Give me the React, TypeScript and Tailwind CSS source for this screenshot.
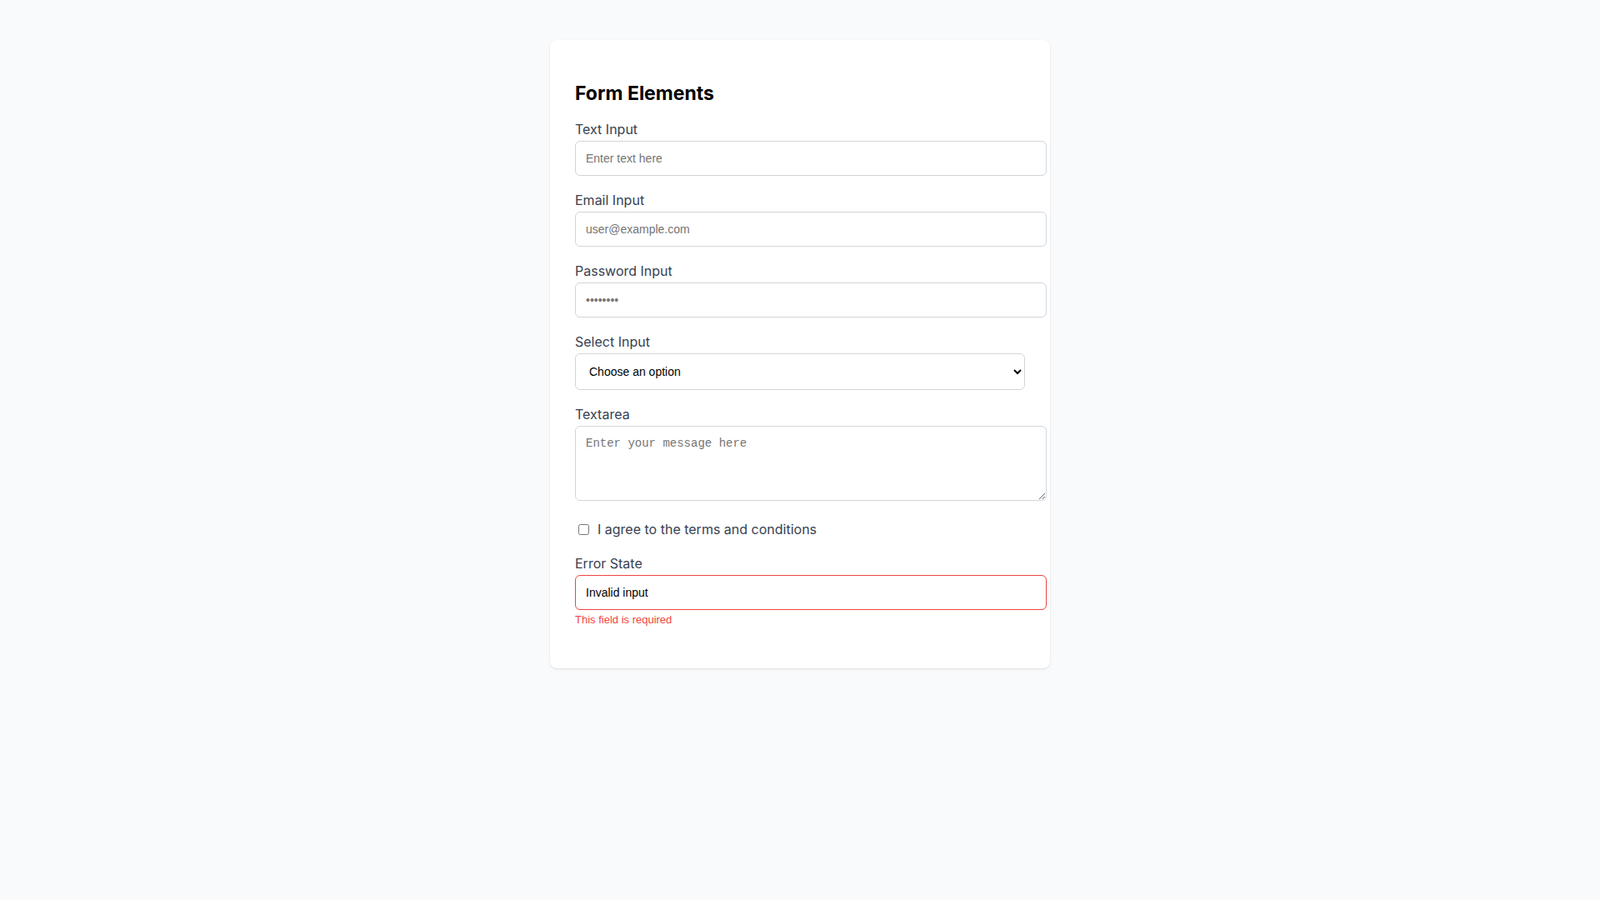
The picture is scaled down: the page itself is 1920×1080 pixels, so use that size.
import React from "react";

const labelCls = "block mb-1 text-base leading-[19px] font-normal text-[#374151]";
const inputCls =
  "box-content block w-full px-3 py-3 text-sm leading-4 border border-[#d1d5db] rounded-md bg-white text-black placeholder:text-[#757575] font-['Liberation_Sans',Arial,sans-serif] outline-none";

function Field({ label, children }: { label: string; children: React.ReactNode }) {
  return (
    <div className="mb-5">
      <label className={labelCls}>{label}</label>
      {children}
    </div>
  );
}

export default function App() {
  return (
    <div className="min-h-screen bg-[#f9fafb] pt-12 font-['Inter',sans-serif]">
      <div className="w-[600px] mx-auto bg-white rounded-lg shadow-sm p-[30px]">
        <h2 className="mt-5 mb-[19px] text-[23px] leading-[29px] font-bold text-black">Form Elements</h2>

        <Field label="Text Input">
          <input type="text" placeholder="Enter text here" className={inputCls} />
        </Field>

        <Field label="Email Input">
          <input type="email" placeholder="user@example.com" className={inputCls} />
        </Field>

        <Field label="Password Input">
          <input type="password" placeholder="••••••••" className={inputCls} />
        </Field>

        <Field label="Select Input">
          <select
            defaultValue=""
            className="block w-full h-[44px] px-3 text-sm border border-[#d1d5db] rounded-md bg-white text-black font-['Liberation_Sans',Arial,sans-serif]"
          >
            <option value="">Choose an option</option>
            <option value="1">Option 1</option>
            <option value="2">Option 2</option>
          </select>
        </Field>

        <Field label="Textarea">
          <textarea
            placeholder="Enter your message here"
            className="box-content block w-full h-16 px-3 py-3 text-sm leading-4 border border-[#d1d5db] rounded-md bg-white placeholder:text-[#757575] font-['Liberation_Mono','Courier_New',monospace] outline-none"
          />
        </Field>

        <div className="pt-[5px] mb-[22px] flex items-center">
          <input type="checkbox" className="ml-1 mr-[10px] w-[13px] h-[13px]" />
          <span className="text-base leading-[19px] font-normal text-[#374151]">
            I agree to the terms and conditions
          </span>
        </div>

        <Field label="Error State">
          <input
            type="text"
            defaultValue="Invalid input"
            className="box-content block w-full px-3 py-3 text-sm leading-4 border border-[#ef4444] rounded-md bg-white text-black font-['Liberation_Sans',Arial,sans-serif] outline-none"
          />
          <p className="mt-1 text-[13px] leading-4 text-[#ef4444] font-['Liberation_Sans',Arial,sans-serif]">
            This field is required
          </p>
        </Field>
      </div>
    </div>
  );
}
